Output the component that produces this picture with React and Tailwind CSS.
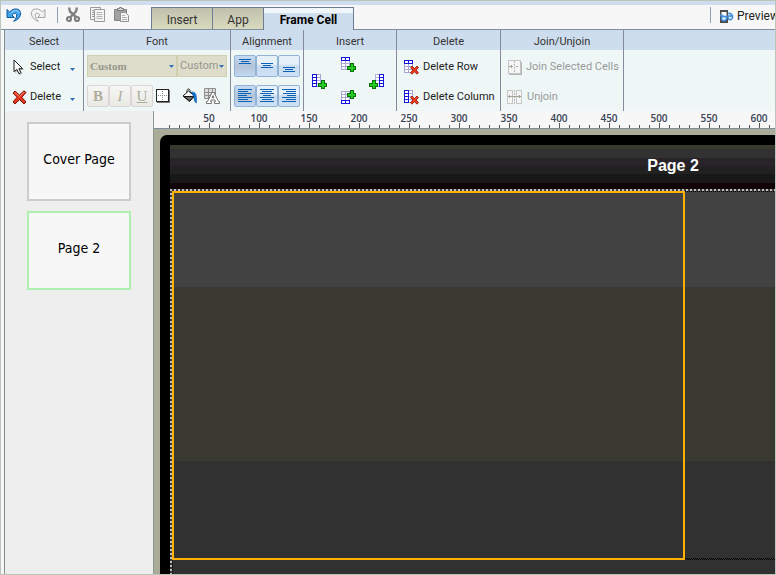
import React from "react";
import clsx from "clsx";

const rulerMarks = [50, 100, 150, 200, 250, 300, 350, 400, 450, 500, 550, 600];
const rulerTicks = Array.from({ length: 65 }, (_, i) => (i + 1) * 10);

function UndoIcon({ muted = false }) {
    return (
        <svg width="16" height="16" viewBox="0 0 16 16" className={muted ? "-scale-x-100" : ""}>
            <path d="M1 2.500V10.500h7.500L6 8.200C8 6 10.200 5.600 10.600 7.500c.4 2-.6 4.500-3 6.800 4.500-1.300 7.400-5 7-8.600C14 1.300 8 .3 3.600 5Z" fill={muted ? "#f0f0f0" : "#3fa4ec"} stroke={muted ? "#a5a5a5" : "#155a9e"} strokeLinejoin="round" />
            <path d="M4.500 6.500C8 3 12 2.500 13.200 6" fill="none" stroke={muted ? "#ffffff" : "#a8e0ff"} />
        </svg>
    );
}

function CutIcon() {
    return (
        <svg width="16" height="16" viewBox="0 0 16 16" fill="none" stroke="#808080">
            <path d="M3 .5l1 4 6 5.500M11 .5l-1 4L4.500 10" strokeWidth="2.400" />
            <circle cx="3" cy="12" r="2" strokeWidth="2.200" />
            <circle cx="11" cy="12" r="2" strokeWidth="2.200" />
        </svg>
    );
}

function CopyIcon() {
    return (
        <svg width="16" height="16" viewBox="0 0 16 16" fill="#f4f4f4" stroke="#9a9a9a">
            <path d="M.5.5h10v12H.5z" />
            <path d="M2 3.500h2M2 5.500h2M2 7.500h2M2 9.500h2" />
            <path d="M4.500 2.500h10v12h-10z" />
            <path d="M6.500 5.500h6M6.500 7.500h6M6.500 9.500h6M6.500 11.500h6" stroke="#b5b5b5" />
        </svg>
    );
}

function PasteIcon() {
    return (
        <svg width="16" height="16" viewBox="0 0 16 16">
            <path d="M.5 2.500h12v11H.5z" fill="#a2a2a2" stroke="#858585" />
            <path d="M3.500 3.500v-2h2v-1h2v1h2v2z" fill="#dddddd" stroke="#777777" />
            <path d="M6.500 5.500h5l3 3v6h-8z" fill="#f4f4f4" stroke="#929292" />
            <path d="M8 8.500h3M8 10.500h5M8 12.500h5" stroke="#b0b0b0" />
        </svg>
    );
}

function PreviewIcon() {
    return (
        <svg width="15" height="15" viewBox="0 0 15 15">
            <path d="M1 1h8v13H1z" fill="#4c4c4c" />
            <path d="M2.500 3h5v8h-5z" fill="#ffffff" />
            <path d="M1 6.500h3.500M9 4.500c2.500-.5 4 .5 4.500 3" fill="none" stroke="#4b98e0" strokeWidth="1.500" />
            <path d="M2.500 7.500h5v2.500c-1 2.500-4.500 2.500-5 0z" fill="#cfe6fb" stroke="#3f8cd8" strokeWidth="1.400" />
            <path d="M9 7h4.500v2c-1 2.500-4 2.500-4.500 0z" fill="#cfe6fb" stroke="#3f8cd8" strokeWidth="1.400" />
        </svg>
    );
}

function CursorIcon() {
    return (
        <svg width="16" height="16" viewBox="0 0 16 16">
            <path d="M3 2.500v12l3-2.500 2 4 2.500-1.200-2-3.800h4z" fill="#9aa3a3" opacity=".6" />
            <path d="M2 1v11.700l2.900-2.300 2 4.300 2-1-2-4h3.700z" fill="#ffffff" stroke="#1c1c1c" />
        </svg>
    );
}

function CrossIcon() {
    return (
        <svg width="15" height="15" viewBox="0 0 15 15">
            <path d="M1 3l2-2 4.500 4L12 .8l2 1.700L9.800 7.300 14 12l-2 2-4.500-4.300L3 14l-2-2 4-4.700z" fill="#e8341c" stroke="#7d1709" strokeLinejoin="round" />
            <path d="M3 2.500l4.500 4L12 2.300" fill="none" stroke="#ff8d6e" />
        </svg>
    );
}

function BorderIcon() {
    return (
        <svg width="14" height="14" viewBox="0 0 14 14" shapeRendering="crispEdges">
            <path d="M.5.5h12v12H.5z" fill="#ffffff" stroke="#222222" />
            <path d="M1 13.500h12.500V1" fill="none" stroke="#777777" />
            <path d="M6.500 2v9M2 6.500h9" stroke="#888888" strokeDasharray="1 1" />
        </svg>
    );
}

function FillIcon() {
    return (
        <svg width="16" height="16" viewBox="0 0 16 16">
            <path d="M5 6V2.500C5 .5 8 .5 8 2.500V6" fill="none" stroke="#222222" />
            <path d="M1 8l5.500-5 6 5-5 5.500z" fill="#ffffff" stroke="#111111" />
            <path d="M2 8.500h10l-4.500 4.500z" fill="#6d6d6d" stroke="#111111" />
            <path d="M9 4c4.500-.5 6 2 5.500 11-2-.5-2.500-3-2.500-6z" fill="#1479d4" stroke="#0b4e96" strokeWidth=".5" />
        </svg>
    );
}

function TextColorIcon() {
    return (
        <svg width="16" height="16" viewBox="0 0 16 16">
            <path d="M.5.5h11v10H.5zM4.500.5v10M8.500.5v10M.5 4.500h11M.5 7.500h11" fill="#dcdcdc" stroke="#8f8f8f" />
            <path d="M2.500 15.500v-2h1L8 4.500h2l4.500 9h1v2h-5v-2h1l-.5-1.500h-4l-.5 1.500h1v2zM8 9.800h2L9 7.500z" fill="#ffffff" stroke="#777777" />
        </svg>
    );
}

// side is the edge of the table that stays blue, mark is the badge drawn over it
function GridIcon({ side, mark }) {
    const plus = side === "right" ? "translate(0 7)" : side === "bottom" ? "translate(7 0)" : "translate(7 7)";
    return (
        <svg width="16" height="16" viewBox="0 0 16 16" shapeRendering="crispEdges" fill="none">
            {side === "right" ? (
                <>
                    <path d="M6.500 1.500h4v12h-4zM6 4.500h4M6 7.500h4M6 10.500h4" stroke="#b3b3dd" fill="#ffffff" />
                    <path d="M10.500 1.500h4v12h-4zM10 4.500h5M10 7.500h5M10 10.500h5" stroke="#1414dc" fill="#ffffff" />
                </>
            ) : (
                <>
                    <path d="M1.500 1.500h8v12h-8zM5.500 1v12M1 4.500h8M1 7.500h8M1 10.500h8" stroke="#a7a7d6" fill="#ffffff" />
                    {side === "top" && <path d="M1.500 1.500h8v3h-8zM5.500 1v3" stroke="#1414dc" />}
                    {side === "bottom" && <path d="M1.500 10.500h8v3h-8zM5.500 10v3" stroke="#1414dc" />}
                    {side === "left" && <path d="M1.500 1.500h4v12h-4zM1 4.500h4M1 7.500h4M1 10.500h4" stroke="#1414dc" />}
                </>
            )}
            {mark === "plus" && (
                <g transform={plus}>
                    <path d="M3 0h4v3h2v4H7v2H3V7H0V3h3z" fill="#077007" />
                    <path d="M4 1h2v3h2v2H6v2H4V6H1V4h3z" fill="#22cc22" />
                </g>
            )}
            {mark === "cross" && (
                <path d="M7.500 8.500l1.500-1.500 2.500 2.500L14 7l1.500 1.500-2.300 2.500 2.300 2.700L14 15.200l-2.500-2.500L9 15.200l-1.500-1.500 2.300-2.700z" fill="#f0391b" stroke="#8a1a0a" strokeWidth=".8" shapeRendering="auto" />
            )}
        </svg>
    );
}

function JoinIcon() {
    return (
        <svg width="15" height="15" viewBox="0 0 15 15" shapeRendering="crispEdges" fill="none">
            <path d="M1.500.5h12v13h-12z" fill="#f5f5f5" stroke="#c4c4c4" />
            <path d="M2 14.500h12.500V2" stroke="#b5b5b5" />
            <path d="M7.500 1v12" stroke="#b8b8b8" strokeDasharray="2 1" />
            <path d="M2 6.500h4M4.500 5v3M9 6.500h2" stroke="#9fa394" />
        </svg>
    );
}

function UnjoinIcon() {
    return (
        <svg width="16" height="15" viewBox="0 0 16 15" shapeRendering="crispEdges" fill="none">
            <path d="M5.500.5h-5v13h5zM9.500.5h5v13h-5z" stroke="#c6c6c6" fill="#f5f5f5" />
            <path d="M7.500 0v14" stroke="#b8b8b8" strokeDasharray="2 1" />
            <path d="M1 6.500h13M2.500 5v3M12.500 5v3" stroke="#9fa394" />
        </svg>
    );
}

function Caret() {
    return (
        <svg width="5" height="3" viewBox="0 0 5 3" className="shrink-0">
            <path d="M0 0h5L2.500 3z" fill="#2f6fb8" />
        </svg>
    );
}

const lineSets = {
    top: "M5 4.500h12M7 6.500h8M5 8.500h12",
    middle: "M5 8.500h12M7 10.500h8M5 12.500h12",
    bottom: "M5 12.500h12M7 14.500h8M5 16.500h12",
    left: "M4 4.500h14M4 6.500h10M4 8.500h13M4 10.500h9M4 12.500h14M4 14.500h10M4 16.500h14",
    center: "M4 4.500h14M6 6.500h10M4 8.500h14M7 10.500h8M4 12.500h14M6 14.500h10M4 16.500h14",
    right: "M4 4.500h14M8 6.500h10M5 8.500h13M9 10.500h9M4 12.500h14M8 14.500h10M4 16.500h14",
};

function AlignButton({ kind, active }) {
    return (
        <button
            aria-label={`Align ${kind}`}
            className={clsx(
                "h-[22px] w-[22px] rounded-[2px] border border-[#93b3d6] bg-linear-to-b",
                active ? "from-[#c5dcf4] via-[#b4c3d6] to-[#c3d9f1]" : "from-[#e6f0f9] from-40% via-[#c9dcef] via-50% to-[#cfe2f5]"
            )}
        >
            <svg width="20" height="20" viewBox="1 1 20 20" shapeRendering="crispEdges">
                <path d={lineSets[kind]} stroke="#0b61b4" />
            </svg>
        </button>
    );
}

function FormatButton({ label, className, children }) {
    return (
        <button aria-label={label} className={clsx("h-[22px] w-[22px] rounded-[2px] border border-[#dcd4d8] bg-linear-to-b from-[#f6f6f4] to-[#e9e9e4] text-center font-['Liberation_Serif',serif] text-[15px] leading-5 text-[#adae9d]", className)}>
            {children}
        </button>
    );
}

function FontSelect({ label, className }) {
    return (
        <label className="relative flex">
            <select aria-label={label} className={clsx("h-[22px] appearance-none border border-[#d0cfae] bg-[#deddcb] px-0.5 text-[#96978c]", className)}>
                <option>Custom</option>
            </select>
            <span className="pointer-events-none absolute top-2.5 right-[3px]"><Caret /></span>
        </label>
    );
}

function Group({ title, className, children }) {
    return (
        <section className={clsx("shrink-0 border-r border-[#878a9c]", className)}>
            <h2 className="h-5 bg-[#cedded] text-center leading-6 text-[#333333]">{title}</h2>
            <div className="flex flex-col gap-2 px-[3px] pt-[5px] pb-1">{children}</div>
        </section>
    );
}

function Command({ icon, caret, disabled, children }) {
    return (
        <button disabled={disabled} className={clsx("flex h-[22px] items-center whitespace-nowrap pt-0.5", disabled ? "text-[#999a9a]" : "text-[#222222]", caret ? "gap-0.5" : "gap-1")}>
            <span className="w-4">{icon}</span>
            <span>{children}</span>
            {caret && <span className="ml-auto pt-1 pr-px"><Caret /></span>}
        </button>
    );
}

function TopBar() {
    return (
        <header className="flex h-[25px] border-b border-[#7e8f9f] pt-0.5">
            <div className="flex w-[150px] shrink-0 gap-2 pl-[5px]">
                <button aria-label="Undo" className="h-4"><UndoIcon /></button>
                <button aria-label="Redo" className="h-4"><UndoIcon muted /></button>
                <span className="ml-[3px] h-4 w-px bg-[#8aa3ba]" />
                <button aria-label="Cut" className="h-4"><CutIcon /></button>
                <button aria-label="Copy" className="h-4"><CopyIcon /></button>
                <button aria-label="Paste" className="h-4"><PasteIcon /></button>
            </div>
            <nav className="flex h-6 text-xs">
                <button className="h-[22px] w-[61px] border-t border-l border-[#6d7c95] bg-linear-to-b from-[#bfc0ad] to-[#dadabf] pt-0.5 text-[#333333]">Insert</button>
                <button className="h-[22px] w-[51px] border-t border-l border-[#6d7c95] bg-linear-to-b from-[#bfc0ad] to-[#dadabf] pt-0.5 text-[#333333]">App</button>
                <button className="h-6 w-[91px] border-x border-t border-[#6d7c95] bg-linear-to-b from-[#f0f6fa] from-20% to-[#cedded] to-20% font-bold text-black">Frame Cell</button>
            </nav>
            <div className="ml-auto flex w-[65px] shrink-0 overflow-hidden">
                <span className="h-4 w-px shrink-0 bg-[#8aa3ba]" />
                <button className="ml-2 flex h-[18px] items-center gap-[3px] text-xs whitespace-nowrap text-[#222222]">
                    <PreviewIcon />
                    Preview
                </button>
            </div>
        </header>
    );
}

function Ribbon() {
    return (
        <div className="flex bg-[#eef7f6]">
            <Group title="Select" className="w-[79px]">
                <div className="flex flex-col gap-2 px-1">
                    <Command icon={<CursorIcon />} caret>Select</Command>
                    <Command icon={<CrossIcon />} caret>Delete</Command>
                </div>
            </Group>
            <Group title="Font" className="w-[147px]">
                <div className="flex">
                    <FontSelect label="Font family" className="w-[90px] font-['Liberation_Serif',serif] font-bold" />
                    <FontSelect label="Font size" className="w-[50px]" />
                </div>
                <div className="flex items-center">
                    <FormatButton label="Bold" className="font-bold">B</FormatButton>
                    <FormatButton label="Italic" className="italic">I</FormatButton>
                    <FormatButton label="Underline" className="underline">U</FormatButton>
                    <button aria-label="Borders" className="ml-[3px]"><BorderIcon /></button>
                    <button aria-label="Fill color" className="ml-3"><FillIcon /></button>
                    <button aria-label="Text color" className="ml-1.5"><TextColorIcon /></button>
                </div>
            </Group>
            <Group title="Alignment" className="w-[73px]">
                <div className="flex">
                    <AlignButton kind="top" active />
                    <AlignButton kind="middle" />
                    <AlignButton kind="bottom" />
                </div>
                <div className="flex">
                    <AlignButton kind="left" active />
                    <AlignButton kind="center" />
                    <AlignButton kind="right" />
                </div>
            </Group>
            <Group title="Insert" className="w-[93px]">
                <div className="flex h-[52px] items-center justify-between pr-2 pl-1">
                    <button aria-label="Insert column left"><GridIcon side="left" mark="plus" /></button>
                    <div className="flex h-[50px] flex-col justify-between">
                        <button aria-label="Insert row above"><GridIcon side="top" mark="plus" /></button>
                        <button aria-label="Insert row below"><GridIcon side="bottom" mark="plus" /></button>
                    </div>
                    <button aria-label="Insert column right"><GridIcon side="right" mark="plus" /></button>
                </div>
            </Group>
            <Group title="Delete" className="w-[104px]">
                <div className="flex flex-col gap-2 px-[3px]">
                    <Command icon={<GridIcon side="top" mark="cross" />}>Delete Row</Command>
                    <Command icon={<GridIcon side="left" mark="cross" />}>Delete Column</Command>
                </div>
            </Group>
            <Group title="Join/Unjoin" className="w-[123px]">
                <div className="flex flex-col gap-2 px-[3px]">
                    <Command icon={<JoinIcon />} disabled>Join Selected Cells</Command>
                    <Command icon={<UnjoinIcon />} disabled>Unjoin</Command>
                </div>
            </Group>
            <div className="h-5 flex-1 bg-[#cedded]" />
        </div>
    );
}

function Ruler() {
    return (
        <div className="h-[18px] overflow-hidden border-b border-[#7d8f9d] bg-[#f7f7f7]">
            <div className="flex h-3 pl-[30px]">
                {rulerMarks.map(mark => (
                    <span key={mark} className="w-[50px] shrink-0 text-center font-['Open_Sans',sans-serif] text-[10px] leading-[14px] font-semibold text-[#3a4356]">{mark}</span>
                ))}
            </div>
            <div className="flex h-[5px] items-end pl-[6px]">
                {rulerTicks.map(tick => (
                    <span key={tick} className={clsx("w-2.5 shrink-0 border-r border-[#555555]", tick % 50 === 0 ? "h-[5px]" : "h-[3px]")} />
                ))}
            </div>
        </div>
    );
}

function Stage() {
    return (
        <main className="flex min-w-0 flex-1 flex-col border-l border-[#8d998f]">
            <Ruler />
            <div className="flex flex-1 overflow-hidden bg-[#abab99] pt-1.5 pl-1.5">
                <div className="flex flex-1 flex-col rounded-tl-[7px] bg-black pt-2.5 pl-2.5">
                    <div className="h-11 overflow-hidden bg-[linear-gradient(#393930_4px,#323232_4px_13px,#29232a_13px_21px,#212121_21px_29px,#181818_29px_38px,#120507_38px)]">
                        <h1 className="w-[1006px] text-center font-['Liberation_Sans',sans-serif] text-base leading-[42px] font-bold text-white">Page 2</h1>
                    </div>
                    <div className="h-0.5 bg-[repeating-linear-gradient(90deg,#bdbdbd_0_2px,#393939_2px_4px)]" />
                    <div className="flex flex-1">
                        <div className="w-0.5 bg-[repeating-linear-gradient(#393939_0_2px,#bdbdbd_2px_4px)]" />
                        <div className="flex flex-1 flex-col bg-[linear-gradient(#424242_96px,#393931_96px_270px,#313131_270px)]">
                            <div className="flex h-[369px]">
                                <div className="w-[513px] border-2 border-[#ffb000]" />
                                <div className="flex flex-1 flex-col justify-between">
                                    <div className="h-px bg-[repeating-linear-gradient(90deg,#000000_0_1px,#424242_1px_2px)]" />
                                    <div>
                                        <div className="h-px bg-[repeating-linear-gradient(90deg,#000000_0_1px,#313131_1px_2px)]" />
                                        <div className="h-px bg-[repeating-linear-gradient(90deg,#313131_0_1px,#000000_1px_2px)]" />
                                    </div>
                                </div>
                            </div>
                            <div className="w-px flex-1 bg-[repeating-linear-gradient(#313131_0_1px,#000000_1px_2px)]" />
                        </div>
                    </div>
                </div>
            </div>
        </main>
    );
}

export default function App() {
    return (
        <div className="flex min-h-screen flex-col border border-[#bcc5bb] bg-[#f7f7f7] font-['Roboto',sans-serif] text-[11px]">
            <div className="h-1 bg-[#cedded]" />
            <TopBar />
            <div className="ml-[3px] flex flex-1 flex-col border-l border-[#7f8f8a]">
                <Ribbon />
                <div className="flex flex-1">
                    <aside className="flex w-[148px] shrink-0 flex-col items-center gap-2.5 bg-[#eeeeee] pt-[11px] font-['DejaVu_Sans_Condensed','DejaVu_Sans',sans-serif] text-sm text-black">
                        <button className="h-[79px] w-[104px] border-2 border-[#cccccc] bg-[#f7f7f7] pb-1.5">Cover Page</button>
                        <button className="h-[79px] w-[104px] border-2 border-[#aeeeae] bg-[#f7f7f7] pb-1.5">Page 2</button>
                    </aside>
                    <Stage />
                </div>
            </div>
        </div>
    );
}
